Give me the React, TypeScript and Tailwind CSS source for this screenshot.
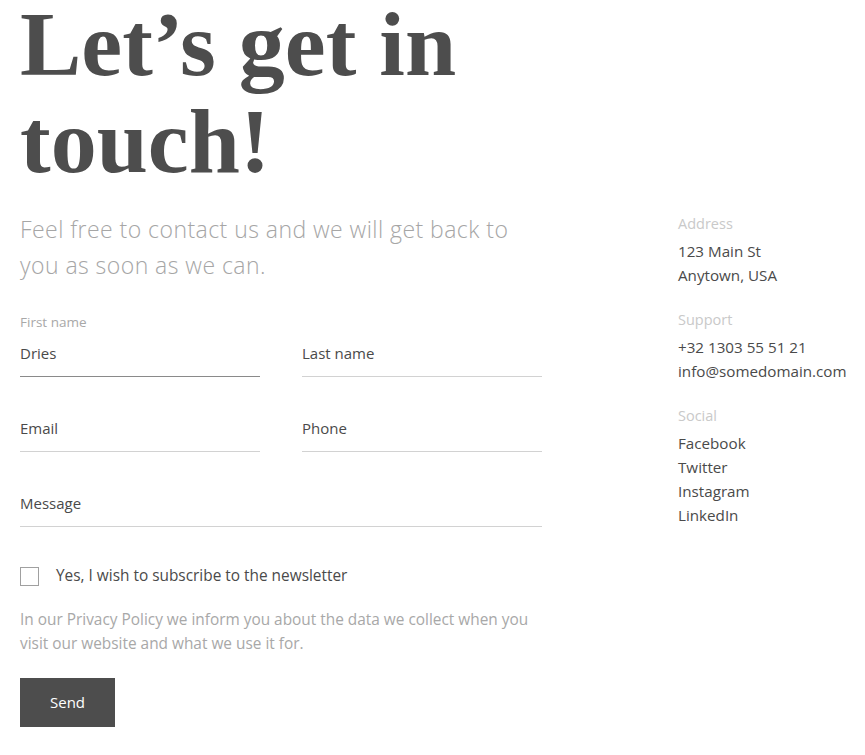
import { useState } from 'react';

const sans = { fontFamily: '"Open Sans", "Liberation Sans", sans-serif' };

function Field({ label, value, active }: { label: string; value?: string; active?: boolean }) {
  return (
    <div>
      <div className="h-[18px] text-[13.5px] leading-[18px] text-[#a8a8a8]">{active ? label : ''}</div>
      <div
        className={`mt-[10px] h-9 pb-3 text-[15px] leading-6 text-[#4a4a4a] border-b ${
          active ? 'border-[#8a8a8a]' : 'border-[#d2d2d2]'
        }`}
      >
        {active ? value : label}
      </div>
    </div>
  );
}

function InfoBlock({ title, lines }: { title: string; lines: string[] }) {
  return (
    <div>
      <div className="text-[14.5px] leading-5 text-[#c9c9c9] mb-[5px]">{title}</div>
      {lines.map((l) => (
        <div key={l} className="text-[15.2px] leading-6 text-[#4a4a4a]">
          {l}
        </div>
      ))}
    </div>
  );
}

export default function App() {
  const [subscribed, setSubscribed] = useState(false);

  return (
    <div className="min-h-screen bg-white px-5 pt-px" style={sans}>
      {/* Heading */}
      <h1
        className="-mt-[5px] text-[92px] leading-[97px] font-bold text-[#4d4d4d]"
        style={{ fontFamily: '"Liberation Serif", "DejaVu Serif", serif' }}
      >
        Let’s get in
        <br />
        touch!
      </h1>

      <div className="flex gap-[136px] mt-[21px]">
        {/* Form column */}
        <div className="w-[522px] shrink-0">
          <p className="text-[23px] leading-9 font-light tracking-[0.45px] text-[#a6a6a6]">
            Feel free to contact us and we will get back to you as soon as we can.
          </p>

          <div className="mt-[30px] grid grid-cols-2 gap-x-[42px] gap-y-[11px]">
            <Field label="First name" value="Dries" active />
            <Field label="Last name" />
            <Field label="Email" />
            <Field label="Phone" />
            <div className="col-span-2">
              <Field label="Message" />
            </div>
          </div>

          <label className="mt-[39px] flex items-center gap-[17px] cursor-pointer">
            <span
              onClick={() => setSubscribed(!subscribed)}
              className="w-[19px] h-[19px] border border-[#a0a0a0] bg-white flex items-center justify-center"
            >
              {subscribed && <span className="w-[9px] h-[9px] bg-[#4d4d4d]" />}
            </span>
            <span className="text-[15.4px] leading-5 text-[#4a4a4a]">Yes, I wish to subscribe to the newsletter</span>
          </label>

          <p className="mt-[22px] text-[15.4px] leading-6 text-[#a8a8a8]">
            In our Privacy Policy we inform you about the data we collect when you visit our website and what we use it
            for.
          </p>

          <button className="mt-[22px] w-[95px] h-[49px] bg-[#4d4d4d] text-white text-[15px]">Send</button>
        </div>

        {/* Contact info */}
        <div className="mt-[3px] flex flex-col gap-[23px]">
          <InfoBlock title="Address" lines={['123 Main St', 'Anytown, USA']} />
          <InfoBlock title="Support" lines={['+32 1303 55 51 21', 'info@somedomain.com']} />
          <InfoBlock title="Social" lines={['Facebook', 'Twitter', 'Instagram', 'LinkedIn']} />
        </div>
      </div>
    </div>
  );
}
